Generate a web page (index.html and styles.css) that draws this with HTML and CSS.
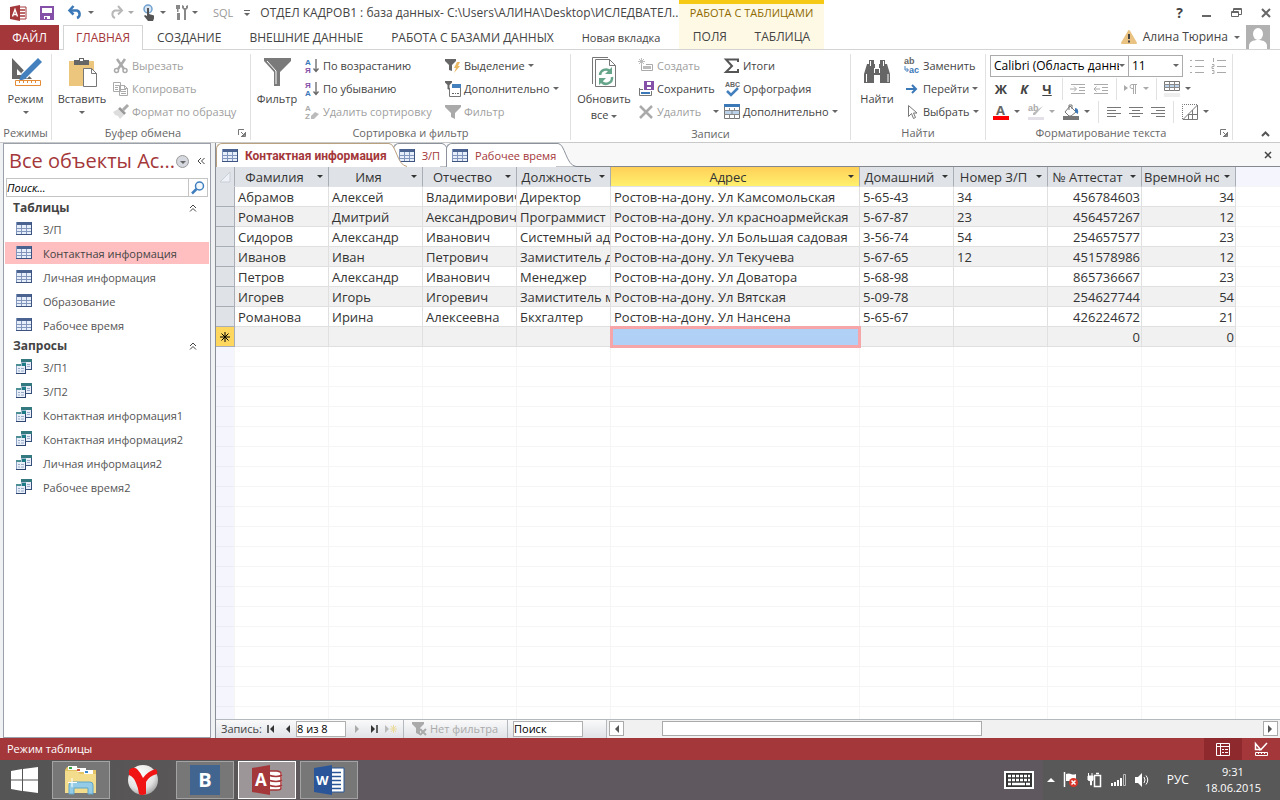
FILE: index.html
```html
<!DOCTYPE html>
<html lang="ru">
<head>
    <meta charset="UTF-8">
    <meta name="viewport" content="width=device-width, initial-scale=1.0">
    <title>ОТДЕЛ КАДРОВ1 : база данных</title>
    <link rel="stylesheet" href="styles.css">
</head>
<body>
    <!-- shared icons -->
    <svg class="sprite" width="0" height="0">
        <symbol id="table" viewBox="0 0 16 14">
            <path d="M0 0h16v13H0z" fill="#e6eefa"/>
            <path d="M0 0h16v3H0z" fill="#4a6390"/>
            <path d="M0 6.500h16M0 9.500h16M5.500 3v10M10.500 3v10M.5 0v13" stroke="#8195bd"/>
            <path d="M0 12.500h16M15.500 0v13" stroke="#3d5480"/>
        </symbol>
        <symbol id="query" viewBox="0 0 16 16">
            <path d="M5 0h11v11H5z" fill="#e9eff8"/>
            <path d="M5 0h11v3H5z" fill="#33797f"/>
            <path d="M15.500 3v8M5 10.500h11" stroke="#36507c"/>
            <path d="M11 5.500h3M11 7.500h3" stroke="#98a9c8"/>
            <path d="M0 5h10v10H0z" fill="#e9eff8"/>
            <path d="M0 5h10v2H0z" fill="#4c9096"/>
            <path d="M.5 7v8" stroke="#8a9fc2"/>
            <path d="M9.500 5v10M0 14.500h10" stroke="#2f4672"/>
            <path d="M2 9.500h2M5 9.500h3M2 12h2M5 12h3" stroke="#98a9c8"/>
            <path d="M5 3h5v4H5z" fill="#9fb9cf"/>
            <path d="M6 4h4v3H6z" fill="#1f7c86"/>
        </symbol>
        <symbol id="funnel" viewBox="0 0 16 16">
            <path d="M0 1h16v2l-6 6v6l-4-2V9L0 3z"/>
        </symbol>
        <symbol id="launcher" viewBox="0 0 8 8">
            <path d="M.5 6V.5H6M3 3l3 3M7.500 3v4.500H3M6.500 4v2.500H4" fill="none" stroke="#777"/>
        </symbol>
        <symbol id="chevrons" viewBox="0 0 8 8">
            <path d="M1 4l3-3 3 3M1 7.500l3-3 3 3" fill="none" stroke="#444"/>
        </symbol>
    </svg>

    <header class="header">
        <div class="header-left">
            <div class="quick">
                <svg class="access-logo" width="17" height="16" viewBox="0 0 17 16"><path d="M9 2h7v12H9z" fill="#fff" stroke="#a4373a"/><path d="M10 5h5M10 8h5M10 11h5" stroke="#a4373a" stroke-width="1.500"/><path d="M0 2l10-2v16L0 14z" fill="#a4373a"/><path d="M2.500 11.500L5 4.500l2.500 7M3.500 9.500h3" stroke="#fff" stroke-width="1.400" fill="none"/></svg>
                <button class="icon-btn q-save" aria-label="Сохранить"><svg width="14" height="14" viewBox="0 0 14 14"><path d="M1 1h12v12H1z" fill="#fff" stroke="#8450a8" stroke-width="2"/><path d="M1 7h12v6H1z" fill="#8450a8"/><path d="M4 10h6v3H4z" fill="#fff"/><path d="M5 11h2v2H5z" fill="#8450a8"/></svg></button>
                <button class="icon-btn q-undo" aria-label="Отменить"><svg width="16" height="13" viewBox="0 0 16 13"><path d="M2 4.500h7a4 4 0 0 1 0 7.500" fill="none" stroke="#3a78b8" stroke-width="2.500"/><path d="M5.500 0L1.500 4.500l4 4" fill="none" stroke="#3a78b8" stroke-width="2.500"/></svg><i class="caret"></i></button>
                <button class="icon-btn q-redo" aria-label="Вернуть"><svg width="16" height="13" viewBox="0 0 16 13"><path d="M13 4.500H7a4 4 0 0 0 0 7.500" fill="none" stroke="#b8b8b8" stroke-width="2"/><path d="M10 0l4 4.500-4 4" fill="none" stroke="#b8b8b8" stroke-width="2"/></svg><i class="caret light"></i></button>
                <button class="icon-btn q-touch" aria-label="Режим сенсорного управления"><svg width="13" height="17" viewBox="0 0 13 17"><circle cx="5" cy="5" r="4" fill="#d8e6f4" stroke="#6ea0d0" stroke-width="1.500"/><path d="M4 4h2v6l5 1.500v3L10 17H5l-4-5 1-1 2 1z" fill="#555"/></svg><i class="caret"></i></button>
                <button class="icon-btn q-tools" aria-label="Сервис"><svg width="13" height="15" viewBox="0 0 13 15"><path d="M1 0v4h1v3h1.500V4H5V0M2 8h3v7H2zM7 0v3l2 2v10h2V5l2-2V0l-2 1v2H9V1z" fill="#888"/></svg><i class="caret"></i></button>
                <span class="sql">SQL</span>
                <button class="icon-btn more" aria-label="Настройка панели"><i class="caret"></i></button>
                <div class="title">ОТДЕЛ КАДРОВ1 : база данных- C:\Users\АЛИНА\Desktop\ИСЛЕДВАТЕЛ...</div>
            </div>
            <nav class="tabs">
                <button class="file">ФАЙЛ</button>
                <button class="current">ГЛАВНАЯ</button>
                <button>СОЗДАНИЕ</button>
                <button>ВНЕШНИЕ ДАННЫЕ</button>
                <button>РАБОТА С БАЗАМИ ДАННЫХ</button>
                <button class="custom">Новая вкладка</button>
            </nav>
        </div>
        <div class="context">
            <div class="context-title">РАБОТА С ТАБЛИЦАМИ</div>
            <nav class="context-tabs">
                <button>ПОЛЯ</button>
                <button>ТАБЛИЦА</button>
            </nav>
        </div>
        <div class="header-right">
            <div class="window-buttons">
                <button aria-label="Справка" class="help">?</button>
                <button aria-label="Свернуть"><svg width="10" height="10" viewBox="0 0 10 10"><path d="M0 8h9" stroke="#666" stroke-width="2"/></svg></button>
                <button aria-label="Восстановить"><svg width="11" height="10" viewBox="0 0 11 10"><path d="M.5 3.500h7v5h-7zM.5 4.500h7M2.500 3V.5h8v6H8M2.500 1.500h8" fill="none" stroke="#666"/></svg></button>
                <button aria-label="Закрыть"><svg width="10" height="10" viewBox="0 0 10 10"><path d="M1 1l8 8M9 1L1 9" stroke="#666" stroke-width="2"/></svg></button>
            </div>
            <div class="user">
                <svg width="16" height="14" viewBox="0 0 16 14"><path d="M8 1l7 12H1z" fill="#eac282" stroke="#eac282" stroke-linejoin="round" stroke-width="2"/><path d="M8 4v5M8 10.500v2" stroke="#444" stroke-width="2"/></svg>
                <span>Алина Тюрина</span>
                <i class="caret"></i>
                <svg width="24" height="24" viewBox="0 0 24 24"><path d="M0 0h24v24H0z" fill="#b1b1b1"/><ellipse cx="12" cy="9" rx="5" ry="6" fill="#fff"/><path d="M3 24v-3c0-4 4-6 9-6s9 2 9 6v3z" fill="#fff"/></svg>
            </div>
        </div>
    </header>

    <section class="ribbon">
        <div class="group g-view">
            <div class="group-body">
                <button class="big">
                    <svg width="32" height="32" viewBox="0 0 32 32"><path d="M2 2l20 21H2zM7 13v6h6z" fill="#666" fill-rule="evenodd"/><path d="M30 3L14 20" stroke="#fff" stroke-width="8"/><path d="M28 2l4 4-17 17-6 2 2-6z" fill="#4480bd"/><path d="M5.500 24.500h25v5h-25z" fill="#fff" stroke="#e58a35"/><path d="M9.500 25v2M13.500 25v2M17.500 25v2M21.500 25v2M25.500 25v2" stroke="#e58a35"/></svg>
                    <span>Режим</span><i class="caret"></i>
                </button>
            </div>
            <div class="group-name"><span>Режимы</span></div>
        </div>

        <div class="group g-clip">
            <div class="group-body">
                <button class="big">
                    <svg width="32" height="32" viewBox="0 0 32 32"><path d="M3 5h25v25H3z" fill="#ecc67d"/><path d="M8 4h5V2h5v2h5v5H8z" fill="#666"/><path d="M14 3h3v2h-3z" fill="#fff"/><path d="M17.500 12.500h8l5 5v13h-13z" fill="#fff" stroke="#777"/><path d="M25.500 12.500v5h5" fill="none" stroke="#777"/></svg>
                    <span>Вставить</span><i class="caret"></i>
                </button>
                <div class="stack off">
                    <button><svg width="16" height="16" viewBox="0 0 16 16"><path d="M4 1l7 10M12 1L5 11" stroke="#aaa" stroke-width="2.500"/><circle cx="3.500" cy="12.500" r="2" fill="none" stroke="#aaa" stroke-width="1.500"/><circle cx="12" cy="12.500" r="2" fill="none" stroke="#aaa" stroke-width="1.500"/></svg>Вырезать</button>
                    <button><svg width="16" height="16" viewBox="0 0 16 16"><path d="M.5 1.500h7v9h-7zM6.500 4.500h5l3 3v7h-8z" fill="#fff" stroke="#aaa"/><path d="M2 4.500h4M2 6.500h3M2 8.500h3M8 8.500h5M8 10.500h5M8 12.500h5M11.500 4v3.500H15" fill="none" stroke="#aaa"/></svg>Копировать</button>
                    <button><svg width="16" height="16" viewBox="0 0 16 16"><path d="M15 1l-5 5" stroke="#aaa" stroke-width="3"/><path d="M7 3l6 6-2 2-6-6z" fill="#999"/><path d="M5 5l6 6-4 4-2-3-3-1-2-3z" fill="#ddd"/></svg>Формат по образцу</button>
                </div>
            </div>
            <div class="group-name"><span>Буфер обмена</span><button class="launch" aria-label="Параметры буфера обмена"><svg width="8" height="8"><use href="#launcher"/></svg></button></div>
        </div>

        <div class="group g-sort">
            <div class="group-body">
                <button class="big">
                    <svg width="32" height="32" viewBox="0 0 32 32"><path d="M3 2h27v3L19 16v14h-6V16L3 5z" fill="#7a7a7a"/><path d="M6 5l9 10v13" fill="none" stroke="#fff"/></svg>
                    <span>Фильтр</span>
                </button>
                <div class="stack c1">
                    <button><svg width="16" height="16" viewBox="0 0 16 16"><text x="1" y="7" class="az blue">А</text><text x="1" y="15" class="az violet">Я</text><path d="M12 1v12M9.500 10.500l2.500 3 2.500-3" fill="none" stroke="#666" stroke-width="1.300"/></svg>По возрастанию</button>
                    <button><svg width="16" height="16" viewBox="0 0 16 16"><text x="1" y="7" class="az violet">Я</text><text x="1" y="15" class="az blue">А</text><path d="M12 1v12M9.500 10.500l2.500 3 2.500-3" fill="none" stroke="#666" stroke-width="1.300"/></svg>По убыванию</button>
                    <button class="off"><svg width="16" height="16" viewBox="0 0 16 16"><text x="1" y="7" class="az gray">A</text><text x="1" y="15" class="az gray">Z</text><path d="M7 12l4-4 4 2-5 5H7z" fill="#bbb"/></svg>Удалить сортировку</button>
                </div>
                <div class="stack">
                    <button><svg width="16" height="16" viewBox="0 0 16 16"><path d="M0 1h11v2L7 7v6l-3-1V7L0 3z" fill="#666"/><path d="M12 4h3l-2 4h2l-6 7 2-5H9z" fill="#e9b860"/></svg>Выделение<i class="caret"></i></button>
                    <button><svg width="16" height="16" viewBox="0 0 16 16"><path d="M4.500 7v8.500h11V4" fill="none" stroke="#777"/><path d="M7 3h9v4H7z" fill="#4480bd"/><path d="M0 0h7v1.500L4.500 4v5L2.500 8V4L0 1.500z" fill="#666"/><path d="M7 12.500h2M10 12.500h1M12 12.500h2" stroke="#666"/></svg>Дополнительно<i class="caret"></i></button>
                    <button class="off"><svg width="16" height="16" fill="#aaa"><use href="#funnel"/></svg>Фильтр</button>
                </div>
            </div>
            <div class="group-name"><span>Сортировка и фильтр</span></div>
        </div>

        <div class="group g-rec">
            <div class="group-body">
                <button class="big">
                    <svg width="32" height="32" viewBox="0 0 32 32"><path d="M4.500 28V1.500H20" fill="none" stroke="#777"/><path d="M7.500 3.500h14l6 6v21h-20z" fill="#fff" stroke="#777"/><path d="M21.500 3.500v6h6" fill="none" stroke="#777"/><path d="M12 19a6 6 0 0 1 10-4M24 21a6 6 0 0 1-11 4" fill="none" stroke="#67a58b" stroke-width="2.500"/><path d="M24 11v7h-7zM11 29v-7h7z" fill="#67a58b"/></svg>
                    <span>Обновить<br>все <i class="caret"></i></span>
                </button>
                <div class="stack c1">
                    <button class="off"><svg width="16" height="16" viewBox="0 0 16 16"><path d="M3.500 0v7M0 3.500h7M1 1l5 5M6 1L1 6" stroke="#bbb"/><path d="M3.500 7v5.500h11v-6H8" fill="none" stroke="#aaa"/><path d="M5 8h8v3H5z" fill="#bbb"/></svg>Создать</button>
                    <button><svg width="16" height="16" viewBox="0 0 16 16"><path d="M1.500 7v7.500h12V10M1 8.500h4" fill="none" stroke="#777"/><path d="M3 11h9v2H3z" fill="#3a78b8"/><path d="M6 0h10v9H6z" fill="#8450a8"/><path d="M9 1h4v3H9zM9 6h4v2H9z" fill="#fff"/></svg>Сохранить</button>
                    <button class="off"><svg width="16" height="16" viewBox="0 0 16 16"><path d="M2 2l12 12M14 2L2 14" stroke="#aaa" stroke-width="2.500"/></svg>Удалить<i class="caret wide"></i></button>
                </div>
                <div class="stack">
                    <button><svg width="16" height="16" viewBox="0 0 16 16"><path d="M14 4V1.500H2L8 8l-6 6h12V11" fill="none" stroke="#555" stroke-width="2"/></svg>Итоги</button>
                    <button><svg width="16" height="16" viewBox="0 0 16 16"><text x="1" y="6" class="abc">ABC</text><path d="M3 10l4 4 7-7" fill="none" stroke="#4480bd" stroke-width="2.500"/></svg>Орфография</button>
                    <button><svg width="16" height="16" viewBox="0 0 16 16"><path d="M.5 1.500h15v13H.5z" fill="#fff" stroke="#777"/><path d="M0 0h16v3H0z" fill="#3a78b8"/><path d="M1 7h14v4H1z" fill="#bcd3ea"/><path d="M5.500 4v3M10.500 4v3M8 7v4M5.500 11v4M10.500 11v4M0 6.500h16M0 10.500h16" stroke="#888"/></svg>Дополнительно<i class="caret"></i></button>
                </div>
            </div>
            <div class="group-name"><span>Записи</span></div>
        </div>

        <div class="group g-find">
            <div class="group-body">
                <button class="big">
                    <svg width="32" height="32" viewBox="0 0 32 32"><path d="M8 4h5v4h1v5h4V8h1V4h5v4h2l3 10v9h-10v-8h-6v8H3v-9L6 8h2z" fill="#666"/><path d="M5.500 18v8M27 18v8M9.500 5v5M22.500 5v5M13.500 12v5M18.500 12v5" stroke="#fff"/></svg>
                    <span>Найти</span>
                </button>
                <div class="stack">
                    <button><svg width="16" height="16" viewBox="0 0 16 16"><text x="0" y="6" class="ab">ab</text><text x="5" y="15" class="ab blue">ac</text><path d="M1 8v4h3M2.500 10l2 2-2 2" fill="none" stroke="#4480bd"/></svg>Заменить</button>
                    <button><svg width="16" height="16" viewBox="0 0 16 16"><path d="M2 8h10M8 4l4 4-4 4" fill="none" stroke="#3a78b8" stroke-width="2"/></svg>Перейти<i class="caret"></i></button>
                    <button><svg width="16" height="16" viewBox="0 0 16 16"><path d="M4.500 1.500v11l3-3 2 5 2-1-2-4.500h3.500z" fill="#fff" stroke="#777"/></svg>Выбрать<i class="caret"></i></button>
                </div>
            </div>
            <div class="group-name"><span>Найти</span></div>
        </div>

        <div class="group g-text">
            <div class="group-body format">
                <div class="format-row fonts">
                    <label class="combo font"><select aria-label="Шрифт"><option>Calibri (Область данных)</option></select><i class="caret"></i></label>
                    <label class="combo size"><select aria-label="Размер шрифта"><option>11</option></select><i class="caret"></i></label>
                    <button aria-label="Маркеры"><svg width="14" height="16" viewBox="0 0 14 16"><path d="M0 2.500h2M0 8.500h2M0 14.500h2M5 2.500h9M5 8.500h9M5 14.500h9" stroke="#aaa"/></svg></button>
                    <button aria-label="Нумерация"><svg width="15" height="16" viewBox="0 0 15 16"><path d="M2.500 0v4M1 6.500h2v2H1v2h2M1 12.500h2v3H1M6 2.500h9M6 8.500h9M6 14.500h9" fill="none" stroke="#aaa"/></svg></button>
                </div>
                <div class="format-row">
                    <button class="letter"><b>Ж</b></button>
                    <button class="letter"><b><em>К</em></b></button>
                    <button class="letter"><b><u>Ч</u></b></button>
                    <span class="bar"></span>
                    <button aria-label="Увеличить отступ"><svg width="16" height="12" viewBox="0 0 16 12"><path d="M1 1.500h14M9 4.500h6M9 7.500h6M1 10.500h14M0 6h6M4 3.500L6.500 6 4 8.500" fill="none" stroke="#aaa"/></svg></button>
                    <button aria-label="Уменьшить отступ"><svg width="16" height="12" viewBox="0 0 16 12"><path d="M1 1.500h14M9 4.500h6M9 7.500h6M1 10.500h14M1 6h6M3.500 3.500L1 6l2.500 2.500" fill="none" stroke="#aaa"/></svg></button>
                    <span class="bar"></span>
                    <button aria-label="Направление текста"><svg width="14" height="10" viewBox="0 0 14 10"><path d="M0 1l4 3-4 3z" fill="#aaa"/><path d="M13 .5H8a2 2 0 0 0 0 4h1M9.500 0v10M11.500 0v10" fill="none" stroke="#aaa"/></svg><i class="caret light"></i></button>
                    <span class="bar"></span>
                    <button aria-label="Сетка"><svg width="16" height="16" viewBox="0 0 16 16"><path d="M.5.5h15v9H.5z" fill="#fff" stroke="#777"/><path d="M1 4h14v3H1z" fill="#bcd3ea"/><path d="M5.500 1v9M10.500 1v9M0 3.500h16M0 6.500h16" stroke="#888"/><path d="M0 12h16v4H0z" fill="#eee"/></svg><i class="caret"></i></button>
                </div>
                <div class="format-row colors">
                    <button aria-label="Цвет шрифта"><svg width="16" height="16" viewBox="0 0 16 16"><text x="3" y="11" class="big-a">A</text><path d="M0 12h16v4H0z" fill="red"/></svg><i class="caret"></i></button>
                    <button aria-label="Выделение цветом"><svg width="16" height="16" viewBox="0 0 16 16"><text x="0" y="7" class="ab gray">ab</text><path d="M15 2L7 11H5V9z" fill="#bbb"/><path d="M0 13h16v3H0z" fill="#e4e0e8"/></svg><i class="caret light"></i></button>
                    <button aria-label="Цвет фона"><svg width="16" height="16" viewBox="0 0 16 16"><path d="M7 2l6 6-5 4H6L2 8z" fill="#fff" stroke="#777"/><path d="M6 6V1h3v4" fill="none" stroke="#777"/><path d="M12 4q4 0 3 6l-3-2z" fill="#3a78b8"/><path d="M0 12h16v4H0z" fill="#777"/></svg><i class="caret"></i></button>
                    <span class="bar"></span>
                    <button aria-label="По левому краю"><svg width="14" height="12" viewBox="0 0 14 12"><path d="M0 1.500h14M0 4.500h9M0 7.500h14M0 10.500h9" stroke="#777"/></svg></button>
                    <button aria-label="По центру"><svg width="14" height="12" viewBox="0 0 14 12"><path d="M0 1.500h14M3 4.500h8M0 7.500h14M3 10.500h8" stroke="#777"/></svg></button>
                    <button aria-label="По правому краю"><svg width="14" height="12" viewBox="0 0 14 12"><path d="M0 1.500h14M5 4.500h9M0 7.500h14M5 10.500h9" stroke="#777"/></svg></button>
                    <span class="bar"></span>
                    <button aria-label="Фон строк"><svg width="16" height="16" viewBox="0 0 16 16"><path d="M.5 15V.5H15" fill="none" stroke="#777" stroke-dasharray="1 1"/><path d="M1 15.500h14.500V1L1 15.500M6 10.500h9M10.500 6v9M6.500 10v5" fill="none" stroke="#777"/></svg><i class="caret"></i></button>
                </div>
            </div>
            <div class="group-name"><span>Форматирование текста</span><button class="launch" aria-label="Параметры текста"><svg width="8" height="8"><use href="#launcher"/></svg></button></div>
        </div>
        <button class="collapse" aria-label="Свернуть ленту"><svg width="9" height="6" viewBox="0 0 9 6"><path d="M1 5l3.500-3.500L8 5" fill="none" stroke="#555" stroke-width="2"/></svg></button>
    </section>

    <main class="workspace">
        <aside class="nav-pane">
            <div class="nav-title">
                <h1>Все объекты Ac...</h1>
                <button class="round" aria-label="Выбор категории"><i class="caret"></i></button>
                <button class="fold" aria-label="Свернуть область"><svg width="8" height="8" viewBox="0 0 8 8"><path d="M4 1L1 4l3 3M7.500 1l-3 3 3 3" fill="none" stroke="#444"/></svg></button>
            </div>
            <div class="nav-search">
                <input type="text" placeholder="Поиск..." aria-label="Поиск объектов">
                <button aria-label="Найти"><svg width="14" height="14" viewBox="0 0 14 14"><circle cx="8.500" cy="5" r="4" fill="#f3f8fd" stroke="#3f7fbf" stroke-width="1.500"/><path d="M5.500 8L1 12.500" stroke="#3f7fbf" stroke-width="2.500"/></svg></button>
            </div>
            <h2>Таблицы <svg width="8" height="8"><use href="#chevrons"/></svg></h2>
            <ul>
                <li><a href="#"><svg width="16" height="14"><use href="#table"/></svg>З/П</a></li>
                <li><a href="#" class="selected"><svg width="16" height="14"><use href="#table"/></svg>Контактная информация</a></li>
                <li><a href="#"><svg width="16" height="14"><use href="#table"/></svg>Личная информация</a></li>
                <li><a href="#"><svg width="16" height="14"><use href="#table"/></svg>Образование</a></li>
                <li><a href="#"><svg width="16" height="14"><use href="#table"/></svg>Рабочее время</a></li>
            </ul>
            <h2>Запросы <svg width="8" height="8"><use href="#chevrons"/></svg></h2>
            <ul>
                <li><a href="#"><svg width="16" height="16"><use href="#query"/></svg>З/П1</a></li>
                <li><a href="#"><svg width="16" height="16"><use href="#query"/></svg>З/П2</a></li>
                <li><a href="#"><svg width="16" height="16"><use href="#query"/></svg>Контактная информация1</a></li>
                <li><a href="#"><svg width="16" height="16"><use href="#query"/></svg>Контактная информация2</a></li>
                <li><a href="#"><svg width="16" height="16"><use href="#query"/></svg>Личная информация2</a></li>
                <li><a href="#"><svg width="16" height="16"><use href="#query"/></svg>Рабочее время2</a></li>
            </ul>
        </aside>

        <div class="document">
            <div class="doc-tabs">
                <button class="doc-tab active"><span class="face"><svg width="16" height="14"><use href="#table"/></svg>Контактная информация</span><svg class="edge" width="20" height="24" viewBox="0 0 20 24"><path d="M0 .5h2c7 0 8 22 18 23v.5H0z" fill="#fff"/><path d="M0 .5h2c7 0 8 22 18 23" fill="none" stroke="#b9a07e"/></svg></button>
                <button class="doc-tab"><span class="face"><svg width="16" height="14"><use href="#table"/></svg>З/П</span><svg class="edge" width="20" height="24" viewBox="0 0 20 24"><path d="M0 .5h2c7 0 8 22 18 23H0z" fill="#fff"/><path d="M0 .5h2c7 0 8 22 18 23" fill="none" stroke="#8b929c"/></svg></button>
                <button class="doc-tab"><span class="face"><svg width="16" height="14"><use href="#table"/></svg>Рабочее время</span><svg class="edge" width="20" height="24" viewBox="0 0 20 24"><path d="M0 .5h2c7 0 8 22 18 23H0z" fill="#fff"/><path d="M0 .5h2c7 0 8 22 18 23" fill="none" stroke="#8b929c"/></svg></button>
                <button class="doc-close" aria-label="Закрыть таблицу"><svg width="8" height="8" viewBox="0 0 8 8"><path d="M1 1l6 6M7 1L1 7" stroke="#444" stroke-width="1.500"/></svg></button>
            </div>

            <div class="sheet">
                <table>
                    <colgroup>
                        <col class="w-mark"><col class="w-col"><col class="w-col"><col class="w-col"><col class="w-col"><col class="w-address"><col class="w-col"><col class="w-col"><col class="w-col"><col class="w-col"><col>
                    </colgroup>
                    <thead>
                        <tr>
                            <th class="corner"><svg width="12" height="12" viewBox="0 0 12 12"><path d="M11 1v10H1z" fill="#eef1f6" stroke="#c9ced8"/></svg></th>
                            <th><div><span>Фамилия</span><i class="caret"></i></div></th>
                            <th><div><span>Имя</span><i class="caret"></i></div></th>
                            <th><div><span>Отчество</span><i class="caret"></i></div></th>
                            <th><div><span>Должность</span><i class="caret"></i></div></th>
                            <th class="picked"><div><span>Адрес</span><i class="caret"></i></div></th>
                            <th><div><span>Домашний</span><i class="caret"></i></div></th>
                            <th><div><span>Номер З/П</span><i class="caret"></i></div></th>
                            <th><div><span>№ Аттестат</span><i class="caret"></i></div></th>
                            <th><div><span>Времной но</span><i class="caret"></i></div></th>
                            <td class="rest"></td>
                        </tr>
                    </thead>
                    <tbody>
                        <tr><th></th><td>Абрамов</td><td>Алексей</td><td>Владимирович</td><td>Директор</td><td>Ростов-на-дону. Ул Камсомольская</td><td>5-65-43</td><td>34</td><td class="num">456784603</td><td class="num">34</td><td class="rest"></td></tr>
                        <tr><th></th><td>Романов</td><td>Дмитрий</td><td>Аександрович</td><td>Программист</td><td>Ростов-на-дону. Ул красноармейская</td><td>5-67-87</td><td>23</td><td class="num">456457267</td><td class="num">12</td><td class="rest"></td></tr>
                        <tr><th></th><td>Сидоров</td><td>Александр</td><td>Иванович</td><td>Системный ад</td><td>Ростов-на-дону. Ул Большая садовая</td><td>3-56-74</td><td>54</td><td class="num">254657577</td><td class="num">23</td><td class="rest"></td></tr>
                        <tr><th></th><td>Иванов</td><td>Иван</td><td>Петрович</td><td>Замиститель д</td><td>Ростов-на-дону. Ул Текучева</td><td>5-67-65</td><td>12</td><td class="num">451578986</td><td class="num">12</td><td class="rest"></td></tr>
                        <tr><th></th><td>Петров</td><td>Александр</td><td>Иванович</td><td>Менеджер</td><td>Ростов-на-дону. Ул Доватора</td><td>5-68-98</td><td></td><td class="num">865736667</td><td class="num">23</td><td class="rest"></td></tr>
                        <tr><th></th><td>Игорев</td><td>Игорь</td><td>Игоревич</td><td>Замиститель м</td><td>Ростов-на-дону. Ул Вятская</td><td>5-09-78</td><td></td><td class="num">254627744</td><td class="num">54</td><td class="rest"></td></tr>
                        <tr><th></th><td>Романова</td><td>Ирина</td><td>Алексеевна</td><td>Бкхгалтер</td><td>Ростов-на-дону. Ул Нансена</td><td>5-65-67</td><td></td><td class="num">426224672</td><td class="num">21</td><td class="rest"></td></tr>
                        <tr class="new"><th><svg width="10" height="10" viewBox="0 0 10 10"><path d="M5 0v10M0 5h10M1.500 1.500l7 7M8.500 1.500l-7 7" stroke="#000"/></svg></th><td></td><td></td><td></td><td></td><td class="cursor"></td><td></td><td></td><td class="num">0</td><td class="num">0</td><td class="rest"></td></tr>
                        <tr class="blank"><th></th><td></td><td></td><td></td><td></td><td></td><td></td><td></td><td></td><td></td><td class="rest"></td></tr>
                    </tbody>
                </table>
            </div>

            <div class="record-bar">
                <div class="record-nav">
                    <label for="record">Запись:</label>
                    <button aria-label="Первая запись"><svg width="8" height="8" viewBox="0 0 8 8"><path d="M1 0v8" stroke="#333" stroke-width="1.500"/><path d="M7 0v8L3 4z" fill="#333"/></svg></button>
                    <button aria-label="Предыдущая запись"><svg width="8" height="8" viewBox="0 0 8 8"><path d="M6 0v8L2 4z" fill="#333"/></svg></button>
                    <input type="text" id="record" value="8 из 8">
                    <button class="next" aria-label="Следующая запись" disabled><svg width="8" height="8" viewBox="0 0 8 8"><path d="M2 0v8l4-4z" fill="#aaa"/></svg></button>
                    <button aria-label="Последняя запись"><svg width="8" height="8" viewBox="0 0 8 8"><path d="M7 0v8" stroke="#333" stroke-width="1.500"/><path d="M1 0v8l4-4z" fill="#333"/></svg></button>
                    <button aria-label="Новая запись" disabled><svg width="14" height="8" viewBox="0 0 14 8"><path d="M1 0v8l4-4z" fill="#bbb"/><path d="M9.500 0v8M6 4h7M7 1l5 6M12 1L7 7" stroke="#ecdc9c"/></svg></button>
                </div>
                <button class="no-filter" disabled><svg width="16" height="14" viewBox="0 0 16 14"><path d="M0 0h12v2L8 6v7l-4-2V6L0 2z" fill="#aaa"/><path d="M8 7l6 6M14 7l-6 6" stroke="#aaa" stroke-width="2"/></svg>Нет фильтра</button>
                <div class="record-search"><input type="text" value="Поиск" aria-label="Поиск записи"></div>
                <div class="scroll">
                    <button aria-label="Влево"><svg width="5" height="8" viewBox="0 0 5 8"><path d="M5 0v8L1 4z" fill="#555"/></svg></button>
                    <div class="track"><div class="thumb"></div></div>
                    <button aria-label="Вправо"><svg width="5" height="8" viewBox="0 0 5 8"><path d="M0 0v8l4-4z" fill="#555"/></svg></button>
                </div>
            </div>
        </div>
    </main>

    <div class="status">
        <span>Режим таблицы</span>
        <button class="on" aria-label="Режим таблицы"><svg width="14" height="13" viewBox="0 0 14 13"><path d="M.5.5h13v12H.5zM0 3.500h14M4.500 0v13M6 6.500h2M9 6.500h3M6 9.500h2M9 9.500h3" fill="none" stroke="#fff"/></svg></button>
        <button aria-label="Конструктор"><svg width="14" height="14" viewBox="0 0 14 14"><path d="M1.500 1.500v6h5zM13 1L7 7.500 5 8" fill="none" stroke="#fff" stroke-width="1.500"/><path d="M1.500 10.500h12v3h-12zM4.500 10v2M7.500 10v2M10.500 10v2" fill="none" stroke="#fff"/></svg></button>
    </div>

    <footer class="taskbar">
        <button class="start" aria-label="Пуск"><svg width="28" height="26" viewBox="0 0 28 26"><path d="M0 4l11-2v10.500H0zM12 2l15-2v12.500H12zM0 13.500h11V24L0 22zM12 13.500h15V26l-15-2z" fill="#fff"/></svg></button>
        <button class="task open" aria-label="Проводник"><svg width="34" height="30" viewBox="0 0 34 30"><path d="M1 5l2-3h10l2 3h17v23H1z" fill="#e3c565"/><path d="M4 1h9v4H4zM13 3h9v4h-9zM20 5h9v4h-9z" fill="#fff"/><path d="M5 2h3v2H5z" fill="#3aa545"/><path d="M13 4h3v2h-3z" fill="#d4573b"/><path d="M21 6h3v2h-3z" fill="#3c88cf"/><path d="M1 6h12l3 3h16v19H1z" fill="#f3dd8c"/><path d="M5 29V20q0-3 3-3h18q3 0 3 3v9h-5v-6H10v6z" fill="#94cbe6" stroke="#5fa5c9"/><path d="M8 13v9M4 17.500h9" stroke="#fff"/></svg></button>
        <button class="task" aria-label="Яндекс.Браузер"><svg width="32" height="32" viewBox="0 0 32 32"><defs><radialGradient id="ball" cx=".4" cy=".3" r=".7"><stop offset="0" stop-color="#fff"/><stop offset=".7" stop-color="#e3e3e3"/><stop offset="1" stop-color="#aaa"/></radialGradient></defs><circle cx="16" cy="16" r="15" fill="url(#ball)"/><path d="M2 6q4-4 8-1 4 4 6 9 5-7 13-9 2 3 1 5-8 2-11 8v12q-4 2-7 0-1-7-3-11Q7 13 2 11z" fill="#f01414"/></svg></button>
        <button class="task open"><span class="vk">B</span></button>
        <button class="task open front" aria-label="Access"><svg width="32" height="32" viewBox="0 0 32 32"><path d="M16 7h11q4 1 4 3v13q0 2-4 3H16z" fill="#fff"/><path d="M17 11q9 3 14 0M17 16q9 3 14 0M17 21q9 3 14 0M17 7h9q4 1 4 2v15q0 2-4 2h-9" fill="none" stroke="#a4373a" stroke-width="1.500"/><path d="M1 4l18-3v30L1 28z" fill="#a4373a"/><text x="4" y="22" class="logo-letter">A</text></svg></button>
        <button class="task open" aria-label="Word"><svg width="32" height="32" viewBox="0 0 32 32"><path d="M17 4h14v24H17z" fill="#fff" stroke="#2a5699"/><path d="M19 8.500h9M19 12.500h9M19 16.500h9M19 20.500h9M19 24.500h9" stroke="#2a5699" stroke-width="1.500"/><path d="M1 4l18-3v30L1 28z" fill="#2a5699"/><text x="3" y="21" class="logo-letter small">W</text></svg></button>
        <div class="keyboard"><svg width="30" height="18" viewBox="0 0 30 18"><rect x="1" y="1" width="28" height="16" fill="#333" stroke="#fff" stroke-width="2"/><path d="M4 5h22M4 9h22" stroke="#fff" stroke-width="2.500" stroke-dasharray="3 1"/><path d="M4 13h3M8 13h13M22 13h4" stroke="#fff" stroke-width="2.500"/></svg></div>
        <div class="tray">
            <svg width="8" height="5" viewBox="0 0 8 5"><path d="M0 4l4-4 4 4z" fill="#fff"/></svg>
            <svg width="16" height="16" viewBox="0 0 16 16"><path d="M1.500 0v15" stroke="#fff" stroke-width="1.500"/><path d="M3 2q3-1 5 0t5 0v7H3z" fill="#fff"/><circle cx="10.500" cy="10.500" r="4.500" fill="#d8352a"/><path d="M8.500 8.500l4 4M12.500 8.500l-4 4" stroke="#fff" stroke-width="1.500"/></svg>
            <svg width="16" height="16" viewBox="0 0 16 16"><path d="M1 4h5v4L4.500 9v4h-1V9L1 8zM1.500 1v3M5 1v3" fill="#fff" stroke="#fff"/><path d="M7.500 3.500h6v11h-6zM9 1.500h3" fill="none" stroke="#fff" stroke-width="1.500"/></svg>
            <svg width="16" height="14" viewBox="0 0 16 14"><path d="M0 10h2v3H0zM3 9h2v4H3zM6 7h2v6H6zM9 5h2v8H9z" fill="#fff"/><path d="M12.500 1.500h2v11h-2z" fill="none" stroke="#bbb"/></svg>
            <svg width="16" height="14" viewBox="0 0 16 14"><path d="M0 4h3l4-4v14l-4-4H0z" fill="#fff"/><path d="M9 4q2 3 0 6M11 2.500q3.500 4.500 0 9" fill="none" stroke="#fff"/></svg>
            <span class="lang">РУС</span>
            <time class="clock">9:31<br>18.06.2015</time>
        </div>
    </footer>
</body>
</html>
```
FILE: styles.css
```css
* {
    box-sizing: border-box;
}

body {
    display: flex;
    flex-direction: column;
    height: 100vh;
    margin: 0;
    overflow: hidden;
    background: #fff;
    color: #444;
    font-family: "Open Sans", "Noto Sans", sans-serif;
    font-size: 11px;
    line-height: 16px;
}

button, input, select {
    margin: 0;
    padding: 0;
    border: none;
    background: none;
    color: inherit;
    font: inherit;
    white-space: nowrap;
}

svg {
    display: block;
    flex: none;
    overflow: visible;
}

.sprite {
    position: absolute;
}

.caret {
    display: inline-block;
    flex: none;
    border: 3px solid transparent;
    border-top-color: #666;
    border-bottom: none;
    vertical-align: middle;
}

.light {
    border-top-color: #aaa;
}

/* header */
.header {
    display: flex;
    flex: none;
    height: 50px;
    border-bottom: 1px solid #d4d4d4;
    font-size: 12px;
}

.header-left {
    width: 679px;
}

.quick {
    display: flex;
    align-items: center;
    height: 25px;
    padding-left: 10px;
}

.icon-btn {
    display: flex;
    align-items: center;
    gap: 4px;
}

.q-save {
    margin-left: 13px;
}

.q-undo, .q-redo {
    margin-left: 14px;
}

.q-touch, .q-tools {
    margin-left: 9px;
}

.sql {
    margin-left: 15px;
    color: #999;
    font-size: 11px;
}

.more {
    margin: 0 10px 0 11px;
    padding-top: 2px;
    border-top: 1px solid #666;
}

.title {
    white-space: nowrap;
}

.tabs {
    display: flex;
    height: 25px;
}

.tabs button {
    flex: none;
    padding: 0 14px;
}

.tabs .file {
    width: 59px;
    margin-right: 4px;
    padding: 0;
    background: #a4373a;
    color: #fff;
}

.tabs .current {
    padding: 0 12px;
    border: 1px solid #d4d4d4;
    border-bottom: none;
    background: #fff;
    color: #a4373a;
}

.tabs .custom {
    padding-right: 0;
    font-size: 11px;
}

.context {
    width: 145px;
    border-top: 4px solid #f6c915;
    background: #fef9e5;
}

.context-title {
    padding-top: 1px;
    color: #8e6a00;
    font-size: 11px;
    text-align: center;
}

.context-tabs {
    display: flex;
    justify-content: space-around;
    height: 28px;
    padding-top: 4px;
}

.header-right {
    display: flex;
    flex: 1;
    flex-direction: column;
    align-items: flex-end;
}

.window-buttons {
    display: flex;
    align-items: center;
    gap: 19px;
    height: 25px;
    padding-right: 9px;
}

.help {
    font-size: 14px;
    font-weight: bold;
}

.user {
    display: flex;
    align-items: center;
    gap: 6px;
    padding-right: 10px;
    height: 24px;
}

/* ribbon */
.ribbon {
    display: flex;
    flex: none;
    height: 93px;
    border-bottom: 1px solid #c9c9c9;
}

.group {
    display: flex;
    flex-direction: column;
    margin: 4px 0 2px;
    border-right: 1px solid #e1e1e1;
}

.g-view {
    width: 52px;
}

.g-clip {
    width: 199px;
}

.g-sort {
    width: 320px;
}

.g-rec {
    width: 280px;
}

.g-find {
    width: 135px;
}

.g-text {
    width: 247px;
}

.group-body {
    display: flex;
    height: 73px;
    padding-left: 4px;
}

.g-view .group-body {
    padding: 0;
    justify-content: center;
}

.group-name {
    display: flex;
    align-items: center;
    height: 14px;
    color: #666;
}

.group-name span {
    flex: 1;
    text-align: center;
}

.launch {
    padding: 0 4px;
}

.big {
    display: flex;
    flex-direction: column;
    align-items: center;
    min-width: 44px;
    padding-top: 2px;
}

.g-clip .big {
    min-width: 52px;
}

.g-rec .big {
    min-width: 58px;
}

.big span {
    margin: 3px 0 4px;
}

.stack {
    display: flex;
    flex-direction: column;
    margin-left: 5px;
}

.stack button {
    display: flex;
    align-items: center;
    gap: 3px;
    height: 23px;
}

.g-sort .c1 {
    width: 136px;
}

.g-rec .c1 {
    width: 81px;
}

.off {
    color: #a0a0a0;
}

.wide {
    margin-left: 9px;
}

.az, .ab, .abc {
    font-family: "Liberation Sans", sans-serif;
    font-size: 8px;
    font-weight: bold;
    fill: #666;
}

.ab {
    font-size: 9px;
}

.abc {
    font-size: 7px;
}

.big-a {
    font-size: 13px;
    font-weight: bold;
    fill: #666;
}

.blue {
    fill: #3a78b8;
}

.violet {
    fill: #8450a8;
}

.gray {
    fill: #aaa;
}

.format {
    flex-direction: column;
}

.format-row {
    display: flex;
    align-items: center;
    gap: 7px;
    height: 23px;
    padding-left: 3px;
}

.format-row button {
    display: flex;
    align-items: center;
    gap: 5px;
}

.format-row .letter {
    width: 16px;
    justify-content: center;
    font-size: 13px;
}

.fonts {
    padding-left: 0;
}

.colors {
    gap: 8px;
}

.combo {
    display: flex;
    align-items: center;
    height: 22px;
    padding: 0 3px;
    border: 1px solid #ababab;
    color: #000;
    font-size: 12px;
}

.combo select {
    flex: 1;
    min-width: 0;
    appearance: none;
}

.font {
    width: 139px;
    margin-right: -8px;
}

.size {
    width: 55px;
}

.bar {
    width: 1px;
    height: 22px;
    background: #e1e1e1;
}

.collapse {
    align-self: flex-end;
    margin: 0 10px 5px auto;
}

/* workspace */
.workspace {
    display: flex;
    flex: 1;
    min-height: 0;
    background: #f0f1f3;
}

.nav-pane {
    width: 208px;
    margin-left: 3px;
    border: 1px solid #9ba1aa;
    background: #fff;
}

.nav-title {
    display: flex;
    align-items: center;
    height: 34px;
    padding: 0 5px;
}

.nav-title h1 {
    flex: 1;
    margin: 0;
    color: #a4373a;
    font-size: 20px;
    font-weight: normal;
    white-space: nowrap;
}

.round {
    width: 13px;
    height: 13px;
    margin-right: 8px;
    border: 1px solid #999;
    border-radius: 50%;
    background: #d5d8de;
    line-height: 8px;
}

.nav-search {
    display: flex;
    height: 19px;
    margin: 0 2px 2px;
    border: 1px solid #c4c4c4;
}

.nav-search input {
    flex: 1;
    min-width: 0;
    font-style: italic;
}

.nav-search input::placeholder {
    color: #000;
}

.nav-search button {
    padding: 0 2px;
    border-left: 1px solid #c4c4c4;
}

.nav-pane h2 {
    display: flex;
    align-items: center;
    justify-content: space-between;
    height: 18px;
    margin: 0;
    padding: 0 13px 0 9px;
    font-size: 12px;
    font-weight: bold;
}

.nav-pane ul {
    margin: 0;
    padding: 0 1px;
    list-style: none;
}

.nav-pane li {
    padding: 1px 0;
}

.nav-pane a {
    display: flex;
    align-items: center;
    gap: 11px;
    height: 22px;
    padding: 2px 0 0 11px;
    color: #555;
    text-decoration: none;
}

.nav-pane a svg {
    margin-bottom: 3px;
}

.nav-pane .selected {
    background: #ffbfc1;
    color: #444;
}

.document {
    display: flex;
    flex: 1;
    flex-direction: column;
    min-width: 0;
    margin-left: 4px;
    border-left: 1px solid #8b8f96;
}

/* document tabs */
.doc-tabs {
    display: flex;
    flex: none;
    height: 24px;
    background: #f8f8f8;
    border-bottom: 1px solid #85888e;
}

.doc-tab {
    display: flex;
    height: 24px;
    margin-right: -14px;
    color: #a4373a;
}

.doc-tab .face {
    display: flex;
    align-items: center;
    gap: 7px;
    padding-left: 5px;
    border: 1px solid #8b929c;
    border-width: 1px 0 0 1px;
    border-radius: 6px 0 0 0;
    background: #fff;
}

.active {
    z-index: 1;
    font-family: Roboto, sans-serif;
    font-size: 12px;
    font-weight: bold;
}

.active .face {
    border-color: #b9a07e;
}

.doc-close {
    margin: 0 8px 0 auto;
}

/* datasheet */
.sheet {
    flex: 1;
    min-height: 0;
    background: #fff;
}

.sheet table {
    width: 100%;
    height: 100%;
    border-collapse: separate;
    border-spacing: 0;
    table-layout: fixed;
    color: #333;
    font-size: 13px;
}

.w-mark {
    width: 19px;
}

.w-col {
    width: 94px;
}

.w-address {
    width: 249px;
}

.sheet th, .sheet td {
    height: 20px;
    padding: 1px 0 0 3px;
    border-right: 1px solid #e0e0e0;
    border-bottom: 1px solid #e0e0e0;
    font-weight: normal;
    line-height: 18px;
    overflow: hidden;
    white-space: nowrap;
}

.sheet th {
    padding: 0;
    border-color: #a9adb5;
    background: #dfe2e7;
}

.sheet thead th {
    border-bottom-color: #dfe2e7;
}

.sheet thead div {
    display: flex;
    align-items: center;
    padding: 0 5px 0 2px;
}

.sheet thead span {
    flex: 1;
    overflow: hidden;
    text-align: center;
}

.sheet thead .caret {
    margin-left: 5px;
    border-top-color: #333;
}

.corner svg {
    margin: auto;
}

.sheet .picked {
    background: linear-gradient(#ffd057, #fff06e);
}

.sheet tbody tr:nth-child(even) td {
    background: #f1f1f1;
}

.sheet tr .num {
    padding: 1px 1px 0 0;
    text-align: right;
}

.sheet tr .rest, .sheet tbody tr:nth-child(even) .rest {
    border-right: none;
    border-color: #f5f5f5;
    background: #fff;
}

.sheet thead tr .rest {
    background: #f5f6fd;
}

.new th {
    background: #ffd75e;
}

.new th svg {
    margin: auto;
}

.sheet .new .cursor {
    background: #b0d1f5;
    outline: 3px solid #f6a5a8;
    outline-offset: -2px;
}

.sheet tbody .blank th, .sheet tbody .blank td {
    height: auto;
    border-color: #f5f5f5;
    border-bottom: none;
    background: repeating-linear-gradient(#fff 0 19px, #f5f5f5 19px 20px);
}

.sheet tbody .blank th {
    background: repeating-linear-gradient(#f5f6fd 0 19px, #ebebf3 19px 20px);
}

/* record bar */
.record-bar {
    display: flex;
    flex: none;
    height: 19px;
    border-top: 1px solid #b4b8bf;
    background: linear-gradient(#fafafb, #dfe2e6);
}

.record-nav {
    display: flex;
    align-items: center;
    width: 188px;
    padding: 0 4px 0 5px;
    border-right: 1px solid #b4b8bf;
}

.record-nav button {
    width: 17px;
    display: flex;
    justify-content: center;
}

.record-nav .next {
    margin-left: 2px;
}

.record-nav label {
    flex: 1;
}

.record-nav input, .record-search input {
    width: 50px;
    height: 16px;
    border: 1px solid #b0b0b0;
    background: #fff;
    color: #000;
}

.no-filter {
    display: flex;
    align-items: center;
    gap: 2px;
    width: 103px;
    padding: 0 8px;
    color: #aaa;
}

.record-search {
    width: 100px;
    padding: 1px 5px;
    border: 1px solid #b4b8bf;
    border-width: 0 1px;
}

.record-search input {
    display: block;
    width: 70px;
}

.scroll {
    display: flex;
    flex: 1;
    padding: 1px 2px;
    background: #f1f1f1;
}

.scroll button {
    display: flex;
    align-items: center;
    justify-content: center;
    width: 15px;
    height: 15px;
    border: 1px solid #aaa;
    background: #fff;
}

.track {
    flex: 1;
}

.thumb {
    width: 50%;
    height: 15px;
    margin-left: 6%;
    border: 1px solid #aaa;
    background: #fff;
}

/* status bar */
.status {
    display: flex;
    flex: none;
    align-items: center;
    height: 22px;
    padding-left: 7px;
    background: #a4373a;
    color: #fff;
}

.status span {
    flex: 1;
}

.status button {
    display: flex;
    align-items: center;
    justify-content: center;
    width: 38px;
    height: 22px;
}

.status .on {
    background: #8e2a2d;
}

/* taskbar */
.taskbar {
    display: flex;
    flex: none;
    align-items: center;
    gap: 4px;
    height: 40px;
    background: linear-gradient(90deg, #555 0, #5a5759 240px, #60585f 360px);
    color: #fff;
}

.start {
    width: 48px;
    padding-left: 11px;
}

.task {
    display: flex;
    align-items: center;
    justify-content: center;
    width: 58px;
    height: 38px;
}

.open {
    border: 1px solid #a3a3a3;
    background: #777;
}

.front {
    border-color: #fff;
    background: #9c9699;
}

.vk {
    width: 30px;
    height: 30px;
    background: #42658f;
    font-size: 20px;
    font-weight: bold;
    line-height: 30px;
}

.logo-letter {
    fill: #fff;
    font-size: 17px;
    font-weight: bold;
}

.small {
    font-size: 13px;
}

.keyboard {
    margin-left: auto;
    padding-right: 5px;
}

.tray {
    display: flex;
    align-items: center;
    gap: 8px;
    height: 40px;
    padding: 0 19px 0 4px;
    background: #585858;
}

.lang {
    margin: 0 8px;
    font-size: 12px;
}

.clock {
    text-align: center;
}
```
